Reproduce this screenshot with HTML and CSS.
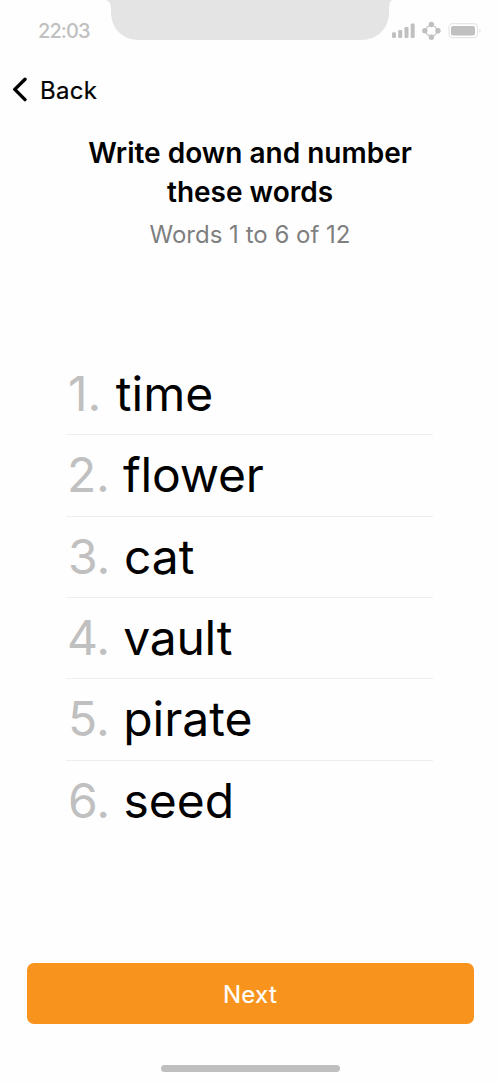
FILE: index.html
```html
<!DOCTYPE html>
<html lang="en">
<head>
<meta charset="utf-8">
<title>Write down and number these words</title>
<link rel="stylesheet" href="styles.css">
</head>
<body>
<main class="screen">
  <header class="status">
    <span class="clock">22:03</span>
    <svg class="notch" width="286" height="40" viewBox="0 0 286 40"><path d="M0 0C4 1.500 5 4.500 5 10V12C5 28 16 40 33 40H255C272 40 283 28 283 12V10C283 4.500 284 1.500 286 0Z" fill="#e4e4e4"/></svg>
    <svg class="indicators" width="92" height="20" viewBox="0 0 92 20">
      <g fill="#c0c0c0">
        <rect x="2" y="12.300" width="4" height="5.700" rx="1.200"/>
        <rect x="8.200" y="10" width="4" height="8" rx="1.200"/>
        <rect x="14.500" y="7" width="4" height="11" rx="1.200"/>
        <rect x="20.700" y="3.500" width="4" height="14.500" rx="1.200"/>
        <circle cx="41.400" cy="4.500" r="2.700"/>
        <circle cx="41.400" cy="17.200" r="2.700"/>
        <circle cx="34.800" cy="10.800" r="2.700"/>
        <circle cx="48" cy="10.800" r="2.700"/>
        <rect x="61" y="6" width="24" height="9.500" rx="2"/>
      </g>
      <circle cx="41.400" cy="10.800" r="5.500" fill="none" stroke="#c0c0c0" stroke-width="1.200"/>
      <rect x="59" y="3.700" width="28.500" height="14" rx="4" fill="none" stroke="#e7e7e7" stroke-width="1.300"/>
      <path d="M89.300 8.500C91.200 9.300 91.200 12 89.300 12.800Z" fill="#e3e3e3"/>
    </svg>
  </header>
  <nav class="nav">
    <svg class="chevron" width="16" height="28" viewBox="0 0 16 28"><path d="M14 3.200 3.800 13.400 14 23.600" fill="none" stroke="#000" stroke-width="3.400" stroke-linecap="round" stroke-linejoin="round"/></svg>
    <span class="back">Back</span>
  </nav>
  <h1 class="title">Write down and number<br>these words</h1>
  <p class="progress">Words 1 to 6 of 12</p>
  <div class="words">
    <div class="word"><span class="num">1.</span> time</div>
    <div class="word tight"><span class="num">2.</span> flower</div>
    <div class="word"><span class="num">3.</span> cat</div>
    <div class="word tight"><span class="num">4.</span> vault</div>
    <div class="word"><span class="num">5.</span> pirate</div>
    <div class="word"><span class="num">6.</span> seed</div>
  </div>
  <button class="next">Next</button>
  <div class="home"></div>
</main>
</body>
</html>
```

FILE: styles.css
```css
* { box-sizing: border-box; }
body { margin: 0; background: #fefefe; font-family: Inter, sans-serif; color: #000; }
.screen { height: 1083px; display: flex; flex-direction: column; overflow: hidden; }
.status { height: 60px; display: flex; align-items: flex-start; color: #c0c0c0; }
.clock { width: 106px; padding: 19px 0 0 38px; font-size: 20px; line-height: 24px; font-weight: 500; letter-spacing: -0.9px; white-space: nowrap; }
.notch { flex: none; }
.indicators { flex: none; margin: 20px 0 0 -2px; }
.nav { height: 60px; display: flex; align-items: center; padding-left: 11px; }
.chevron { flex: none; margin-right: 13px; }
.back { padding-top: 1px; font-size: 24px; line-height: 30px; font-weight: 400; letter-spacing: 0.3px; -webkit-text-stroke: 0.2px #000; }
.title { margin: 14px 0 0; font-size: 28px; line-height: 39px; font-weight: 600; text-align: center; }
.progress { margin: 8px 0 0; font-size: 24px; line-height: 30px; text-align: center; color: #7f7f7f; }
.words { margin: 104px 67px 0 66px; }
.word { height: 81.333px; padding: 11px 0 0 2px; font-size: 48px; line-height: 58px; white-space: pre; border-bottom: 1.500px solid #eee; }
.word:first-child .num { margin-right: 1px; }
.word:last-child { border-bottom: 0; }
.tight { padding-left: 1px; letter-spacing: -0.2px; }
.num { color: #c0c0c0; font-weight: 400; }
.next { margin: 121px 26.500px 0; height: 61px; border: 0; padding: 3px 0 0; border-radius: 7px; background: #f8931d; color: #fff; font: 400 24px/30px Inter, sans-serif; letter-spacing: 0.3px; -webkit-text-stroke: 0.2px #fff; }
.home { width: 179px; height: 7px; margin: 41px auto 0; margin-left: 161px; border-radius: 4px; background: #bfbfbf; }
```
